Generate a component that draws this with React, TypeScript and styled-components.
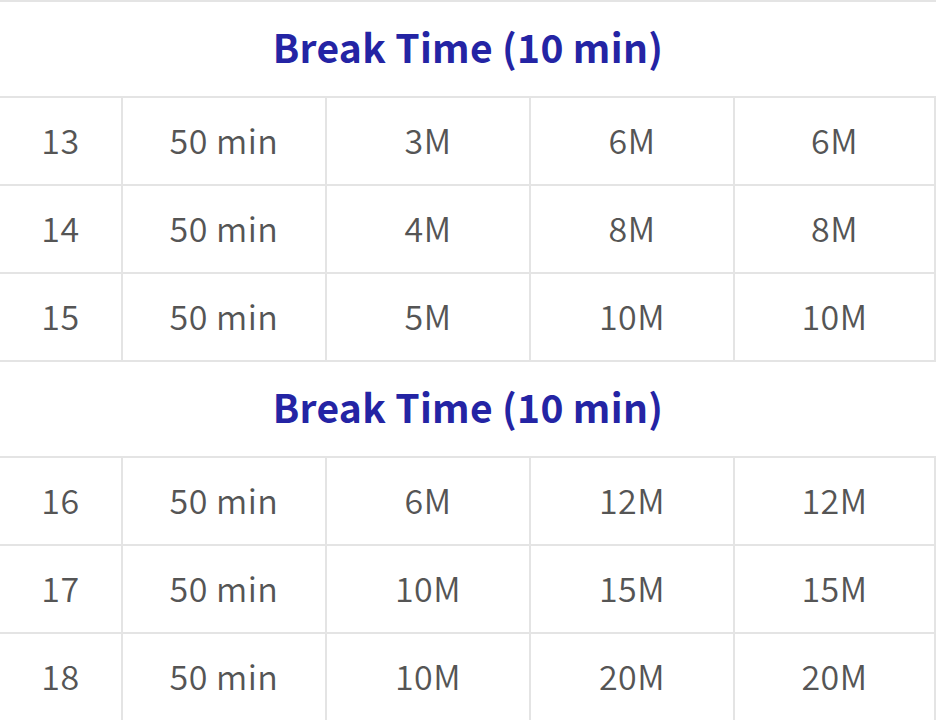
import React from 'react'
import styled, { createGlobalStyle } from 'styled-components'

const GlobalStyle = createGlobalStyle`
  body {
    margin: 0;
    background: #ffffff;
    font-family: "Noto Sans CJK KR", "Noto Sans", sans-serif;
  }
`

const Page = styled.div`
  width: 936px;
  height: 720px;
  overflow: hidden;
  background: #fff;
`

const SectionTitle = styled.div`
  height: 96px;
  box-sizing: border-box;
  padding-bottom: 6px;
  border-top: 2px solid #e4e4e4;
  display: flex;
  align-items: center;
  justify-content: center;
  color: #2424a4;
  font-size: 39px;
  font-weight: 700;
  letter-spacing: 0.3px;
`

const Row = styled.div`
  display: grid;
  grid-template-columns: 121px 204px 204px 204px 203px;
  height: 88px;
  box-sizing: border-box;
  border-top: 2px solid #e4e4e4;
`

const Cell = styled.div<{ first?: boolean; last?: boolean }>`
  display: flex;
  align-items: center;
  justify-content: center;
  padding-bottom: 3px;
  border-left: ${({ first }) => (first ? 'none' : '2px solid #e4e4e4')};
  border-right: ${({ last }) => (last ? '2px solid #e4e4e4' : 'none')};
  color: #555555;
  font-size: 34px;
  font-weight: 350;
  letter-spacing: 0.5px;
`

interface ILessonRow {
  period: number
  length: string
  a: string
  b: string
  c: string
}

const sections: ILessonRow[][] = [
  [
    { period: 13, length: '50 min', a: '3M', b: '6M', c: '6M' },
    { period: 14, length: '50 min', a: '4M', b: '8M', c: '8M' },
    { period: 15, length: '50 min', a: '5M', b: '10M', c: '10M' },
  ],
  [
    { period: 16, length: '50 min', a: '6M', b: '12M', c: '12M' },
    { period: 17, length: '50 min', a: '10M', b: '15M', c: '15M' },
    { period: 18, length: '50 min', a: '10M', b: '20M', c: '20M' },
  ],
]

export default function App() {
  return (
    <>
      <GlobalStyle />
      <Page>
        {sections.map((rows, i) => (
          <React.Fragment key={i}>
            <SectionTitle>Break Time (10 min)</SectionTitle>
            {rows.map((r) => (
              <Row key={r.period}>
                <Cell first>{r.period}</Cell>
                <Cell>{r.length}</Cell>
                <Cell>{r.a}</Cell>
                <Cell>{r.b}</Cell>
                <Cell last>{r.c}</Cell>
              </Row>
            ))}
          </React.Fragment>
        ))}
      </Page>
    </>
  )
}
